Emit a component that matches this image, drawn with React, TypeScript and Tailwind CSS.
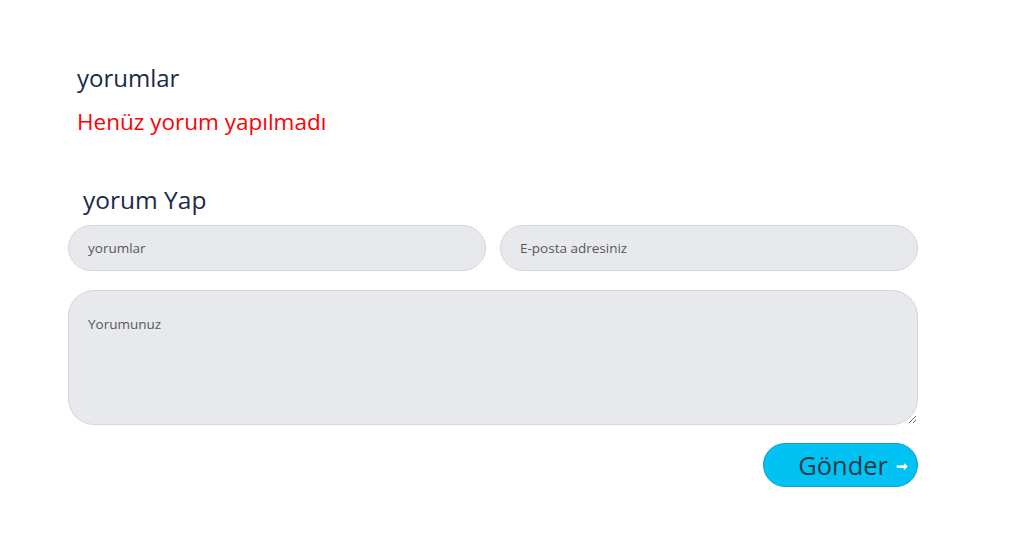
import { useState } from "react";

export default function App() {
  const [name, setName] = useState("");
  const [email, setEmail] = useState("");
  const [comment, setComment] = useState("");

  return (
    <div
      className="min-h-[544px] w-[1024px] bg-white"
      style={{ fontFamily: '"Open Sans", "Noto Sans", sans-serif' }}
    >
      <div className="w-[918px] pl-[68px] pt-[62px]">
        <h3 className="pl-[9px] text-[24px] leading-[32px] text-[#1b2a4a]">
          yorumlar
        </h3>
        <p className="mt-[13px] pl-[9px] text-[22.5px] leading-[30px] text-[#f00]">
          Henüz yorum yapılmadı
        </p>

        <form className="mt-[47px]" onSubmit={(e) => e.preventDefault()}>
          <h4 className="pl-[15px] text-[24.5px] leading-[32px] text-[#1b2a4a]">
            yorum Yap
          </h4>
          <div className="mt-[9px] grid grid-cols-2 gap-[14px]">
            <input
              value={name}
              onChange={(e) => setName(e.target.value)}
              placeholder="yorumlar"
              className="h-[46px] rounded-full border border-[#d3d6db] bg-[#e8e9ec] px-[19px] text-[13.5px] text-[#444] placeholder:text-[#55595e] outline-none"
            />
            <input
              value={email}
              onChange={(e) => setEmail(e.target.value)}
              placeholder="E-posta adresiniz"
              className="h-[46px] rounded-full border border-[#d3d6db] bg-[#e8e9ec] px-[19px] text-[13.5px] text-[#444] placeholder:text-[#55595e] outline-none"
            />
          </div>
          <textarea
            value={comment}
            onChange={(e) => setComment(e.target.value)}
            placeholder="Yorumunuz"
            className="mt-[19px] block h-[135px] w-full rounded-[26px] border border-[#d3d6db] bg-[#e8e9ec] px-[19px] pt-[23px] text-[13.5px] leading-[20px] text-[#444] placeholder:text-[#55595e] outline-none"
          />
          <div className="mt-[18px] flex justify-end">
            <button
              type="submit"
              className="flex h-[44px] w-[155px] items-center justify-end gap-[8px] rounded-full border border-[#1a9cc4] bg-[#00c2f3] pr-[9px] text-[25.5px] text-[#2f3b44]"
            >
              Gönder
              <span className="text-[14px] font-bold text-white">➞</span>
            </button>
          </div>
        </form>
      </div>
    </div>
  );
}
